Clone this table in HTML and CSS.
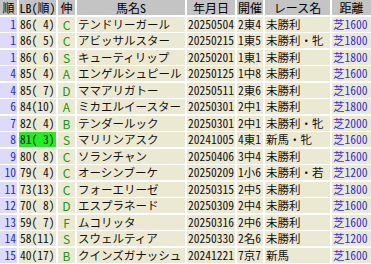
FILE: index.html
```html
<!DOCTYPE html>
<html lang="ja">
<head>
<meta charset="utf-8">
<link rel="stylesheet" href="styles.css">
</head>
<body>
<div class="tbl">
  <div class="h">順</div><div class="h">LB(順)</div><div class="h">伸</div><div class="h">馬名S</div><div class="h">年月日</div><div class="h">開催</div><div class="h">レース名</div><div class="h">距離</div>

  <div class="no">1</div><div class="c lb">86( 4)</div><div class="c nb">C</div><div class="c nm">テンドリーガール</div><div class="c">20250504</div><div class="c">2東4</div><div class="c">未勝利</div><div class="c ds">芝1600</div>
  <div class="no">1</div><div class="c lb">86( 5)</div><div class="c nb">C</div><div class="c nm">アビッサルスター</div><div class="c">20250215</div><div class="c">1東5</div><div class="c">未勝利・牝</div><div class="c ds">芝1800</div>
  <div class="no">1</div><div class="c lb">86( 6)</div><div class="c nb">S</div><div class="c nm">キューティリップ</div><div class="c">20250201</div><div class="c">1東1</div><div class="c">未勝利</div><div class="c ds">芝1800</div>
  <div class="no">4</div><div class="c lb">85( 4)</div><div class="c nb">A</div><div class="c nm">エンゲルシュピール</div><div class="c">20250125</div><div class="c">1中8</div><div class="c">未勝利</div><div class="c ds">芝1600</div>
  <div class="no">4</div><div class="c lb">85( 7)</div><div class="c nb">D</div><div class="c nm">ママアリガトー</div><div class="c">20250511</div><div class="c">2東6</div><div class="c">未勝利</div><div class="c ds">芝1600</div>
  <div class="no">6</div><div class="c lb">84(10)</div><div class="c nb">A</div><div class="c nm">ミカエルイースター</div><div class="c">20250301</div><div class="c">2中1</div><div class="c">未勝利</div><div class="c ds">芝1800</div>
  <div class="no">7</div><div class="c lb">82( 4)</div><div class="c nb">B</div><div class="c nm">テンダールック</div><div class="c">20250301</div><div class="c">2中1</div><div class="c">未勝利・牝</div><div class="c ds">芝2000</div>
  <div class="no">8</div><div class="c lb hi">81( 3)</div><div class="c nb">S</div><div class="c nm">マリリンアスク</div><div class="c">20241005</div><div class="c">4東1</div><div class="c">新馬・牝</div><div class="c ds">芝1600</div>
  <div class="no">9</div><div class="c lb">80( 8)</div><div class="c nb">C</div><div class="c nm">ソランチャン</div><div class="c">20250406</div><div class="c">3中4</div><div class="c">未勝利</div><div class="c ds">芝1600</div>
  <div class="no">10</div><div class="c lb">79( 4)</div><div class="c nb">C</div><div class="c nm">オーシンブーケ</div><div class="c">20250209</div><div class="c">1小6</div><div class="c">未勝利・若</div><div class="c ds">芝1200</div>
  <div class="no">11</div><div class="c lb">73(13)</div><div class="c nb">C</div><div class="c nm">フォーエリーゼ</div><div class="c">20250315</div><div class="c">2中5</div><div class="c">未勝利</div><div class="c ds">芝1800</div>
  <div class="no">12</div><div class="c lb">70( 8)</div><div class="c nb">D</div><div class="c nm">エスプラネード</div><div class="c">20250309</div><div class="c">2中4</div><div class="c">未勝利</div><div class="c ds">芝1600</div>
  <div class="no">13</div><div class="c lb">59( 7)</div><div class="c nb">F</div><div class="c nm">ムコリッタ</div><div class="c">20250316</div><div class="c">2中6</div><div class="c">未勝利</div><div class="c ds">芝1600</div>
  <div class="no">14</div><div class="c lb">58(11)</div><div class="c nb">S</div><div class="c nm">スウェルティア</div><div class="c">20250330</div><div class="c">2名6</div><div class="c">未勝利</div><div class="c ds">芝1200</div>
  <div class="no">15</div><div class="c lb">40(17)</div><div class="c nb">B</div><div class="c nm">クインズガナッシュ</div><div class="c">20241221</div><div class="c">7京7</div><div class="c">新馬</div><div class="c ds">芝1600</div>
</div>
</body>
</html>
```
FILE: styles.css
```css
html, body {
  margin: 0;
  padding: 0;
  background: #ffffff;
}
body {
  font-family: "Noto Sans CJK JP", sans-serif;
  font-size: 11.5px;
  color: #111111;
}
.tbl {
  display: grid;
  grid-template-columns: 17px 37px 17px 108px 48px 26px 65px 39px;
  column-gap: 2px;
  row-gap: 1.5px;
  grid-auto-rows: 15px;
}
.tbl > div {
  line-height: 15px;
  white-space: pre;
  overflow: hidden;
  font-feature-settings: "hwid" 1;
}
.tbl > .nm {
  font-feature-settings: normal;
  padding-left: 1px;
}
.h {
  background: #c4c4c4;
  text-align: center;
  color: #000;
  font-size: 12px;
}
.no {
  background: #dcdcfa;
  color: #2a2ad0;
  text-align: right;
  padding-right: 1px;
}
.c {
  background: #ece9d2;
  padding-left: 1px;
}
.tbl > .nb {
  color: #119911;
  text-align: center;
  padding-left: 0;
  font-size: 12px;
  font-feature-settings: normal;
}
.hi {
  background: #22ee22;
}
.ds {
  color: #2e2ef0;
}
```
